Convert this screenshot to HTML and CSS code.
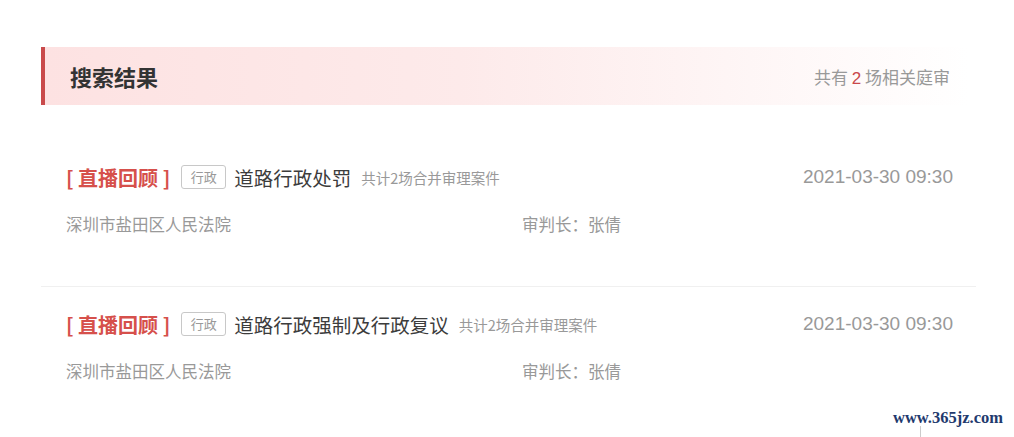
FILE: index.html
```html
<!DOCTYPE html>
<html lang="zh-CN">
<head>
    <meta charset="UTF-8">
    <meta name="viewport" content="width=device-width, initial-scale=1.0">
    <title>搜索结果</title>
    <link rel="stylesheet" href="styles.css">
</head>
<body>
    <div class="wrap">
        <div class="result-head">
            <h2>搜索结果</h2>
            <p class="total">共有 <em>2</em> 场相关庭审</p>
        </div>

        <ul class="trial-list">
            <li class="trial">
                <div class="trial-top">
                    <span class="status">[ 直播回顾 ]</span>
                    <span class="tag">行政</span>
                    <span class="name">道路行政处罚</span>
                    <span class="merge">共计2场合并审理案件</span>
                    <span class="time">2021-03-30 09:30</span>
                </div>
                <div class="trial-info">
                    <span class="court">深圳市盐田区人民法院</span>
                    <span class="judge">审判长：张倩</span>
                </div>
            </li>
            <li class="trial">
                <div class="trial-top">
                    <span class="status">[ 直播回顾 ]</span>
                    <span class="tag">行政</span>
                    <span class="name">道路行政强制及行政复议</span>
                    <span class="merge">共计2场合并审理案件</span>
                    <span class="time">2021-03-30 09:30</span>
                </div>
                <div class="trial-info">
                    <span class="court">深圳市盐田区人民法院</span>
                    <span class="judge">审判长：张倩</span>
                </div>
            </li>
        </ul>
    </div>

    <div class="watermark">www.365jz.com</div>
    <div class="wm-line"></div>
</body>
</html>
```

FILE: styles.css
```css
body {
    margin: 0;
    padding: 0;
    background: #fff;
    font-family: "Noto Sans CJK SC", "Noto Sans", sans-serif;
    color: #333;
}
.wrap {
    width: 935px;
    margin-left: 41px;
    padding-top: 47px;
}
.result-head {
    height: 58px;
    display: flex;
    align-items: center;
    justify-content: space-between;
    padding: 0 18px 0 25px;
    border-left: 4px solid #c94a4b;
    background: linear-gradient(to right, #fde2e2 0%, #fdeaea 45%, #fff 100%);
    box-sizing: border-box;
    width: 927px;
}
.result-head h2 {
    margin: 0;
    font-size: 22px;
    font-weight: bold;
    color: #333;
}
.total {
    margin: 0;
    font-size: 17px;
    color: #999;
}
.total em {
    font-style: normal;
    color: #c9484b;
    font-family: "Liberation Sans", sans-serif;
}
.trial-list {
    list-style: none;
    margin: 35px 0 0;
    padding: 0;
}
.trial {
    padding: 23px 23px 51px 25px;
    border-bottom: 1px solid #f0f0f0;
}
.trial:last-child {
    border-bottom: none;
}
.trial-top {
    height: 28px;
    display: flex;
    align-items: center;
}
.status {
    font-size: 20px;
    font-weight: bold;
    color: #d6504b;
    margin-right: 11px;
}
.tag {
    width: 45px;
    height: 24px;
    box-sizing: border-box;
    border: 1px solid #c8c8c8;
    border-radius: 3px;
    font-size: 13px;
    color: #999;
    line-height: 22px;
    text-align: center;
    margin-right: 8px;
}
.name {
    font-size: 19.5px;
    color: #3c3c3c;
    margin-right: 10px;
}
.merge {
    font-size: 14.5px;
    color: #999;
}
.time {
    margin-left: auto;
    font-family: "Liberation Sans", Arial, sans-serif;
    font-size: 19px;
    color: #999;
}
.trial-info {
    margin-top: 22px;
    display: flex;
    font-size: 16.5px;
    line-height: 22px;
    color: #999;
}
.court {
    width: 456px;
}
.watermark {
    position: absolute;
    left: 893px;
    top: 408px;
    font-family: "Liberation Serif", serif;
    font-weight: bold;
    font-size: 16.5px;
    color: #1f3a6e;
}
.wm-line {
    position: absolute;
    left: 920px;
    top: 426px;
    width: 1px;
    height: 11px;
    background: #ccc;
}
```
